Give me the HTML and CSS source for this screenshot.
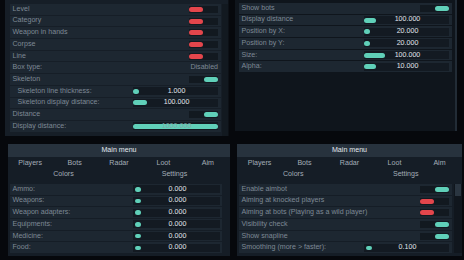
FILE: index.html
```html
<!DOCTYPE html>
<html>
<head>
<meta charset="utf-8">
<link rel="stylesheet" href="styles.css">
</head>
<body>
<div class="screen">
  <div class="top">
    <section class="win win-tl">
      <div class="list">
        <div class="row"><span class="lbl">Level</span><span class="tog off"><i></i></span></div>
        <div class="row"><span class="lbl">Category</span><span class="tog off"><i></i></span></div>
        <div class="row"><span class="lbl">Weapon in hands</span><span class="tog off"><i></i></span></div>
        <div class="row"><span class="lbl">Corpse</span><span class="tog off"><i></i></span></div>
        <div class="row"><span class="lbl">Line</span><span class="tog off"><i></i></span></div>
        <div class="row"><span class="lbl">Box type:</span><span class="combo">Disabled</span></div>
        <div class="row"><span class="lbl">Skeleton</span><span class="tog on"><i></i></span></div>
        <div class="row"><span class="lbl sub">Skeleton line thickness:</span><span class="slider"><i style="width:6px"></i><b>1.000</b></span></div>
        <div class="row"><span class="lbl sub">Skeleton display distance:</span><span class="slider"><i style="width:14px"></i><b>100.000</b></span></div>
        <div class="row"><span class="lbl">Distance</span><span class="tog on"><i></i></span></div>
        <div class="row"><span class="lbl">Display distance:</span><span class="slider"><i style="width:85px"></i><b class="dim">1000.000</b></span></div>
      </div>
      <div class="vbar"></div>
    </section>
    <section class="win win-tr">
      <div class="list">
        <div class="row"><span class="lbl">Show bots</span><span class="tog on"><i></i></span></div>
        <div class="row"><span class="lbl">Display distance</span><span class="slider"><i style="width:12px"></i><b>100.000</b></span></div>
        <div class="row"><span class="lbl">Position by X:</span><span class="slider"><i style="width:6px"></i><b>20.000</b></span></div>
        <div class="row"><span class="lbl">Position by Y:</span><span class="slider"><i style="width:6px"></i><b>20.000</b></span></div>
        <div class="row"><span class="lbl">Size:</span><span class="slider"><i style="width:21px"></i><b>100.000</b></span></div>
        <div class="row"><span class="lbl">Alpha:</span><span class="slider"><i style="width:12px"></i><b>10.000</b></span></div>
      </div>
    </section>
  </div>
  <div class="bottom">
    <section class="win menu menu-l">
      <div class="menu-head">Main menu</div>
      <div class="tabs five"><span>Players</span><span>Bots</span><span>Radar</span><span>Loot</span><span>Aim</span></div>
      <div class="tabs two"><span>Colors</span><span>Settings</span></div>
      <div class="list">
        <div class="row"><span class="lbl">Ammo:</span><span class="slider"><i class="dot"></i><b>0.000</b></span></div>
        <div class="row"><span class="lbl">Weapons:</span><span class="slider"><i class="dot"></i><b>0.000</b></span></div>
        <div class="row"><span class="lbl">Weapon adapters:</span><span class="slider"><i class="dot"></i><b>0.000</b></span></div>
        <div class="row"><span class="lbl">Equipments:</span><span class="slider"><i class="dot"></i><b>0.000</b></span></div>
        <div class="row"><span class="lbl">Medicine:</span><span class="slider"><i class="dot"></i><b>0.000</b></span></div>
        <div class="row"><span class="lbl">Food:</span><span class="slider"><i class="dot"></i><b>0.000</b></span></div>
      </div>
    </section>
    <section class="win menu menu-r">
      <div class="menu-head">Main menu</div>
      <div class="tabs five"><span>Players</span><span>Bots</span><span>Radar</span><span>Loot</span><span>Aim</span></div>
      <div class="tabs two"><span>Colors</span><span>Settings</span></div>
      <div class="body">
        <div class="list">
          <div class="row"><span class="lbl">Enable aimbot</span><span class="tog on"><i></i></span></div>
          <div class="row"><span class="lbl">Aiming at knocked players</span><span class="tog off"><i></i></span></div>
          <div class="row"><span class="lbl">Aiming at bots (Playing as a wild player)</span><span class="tog off"><i></i></span></div>
          <div class="row"><span class="lbl">Visibility check</span><span class="tog on"><i></i></span></div>
          <div class="row"><span class="lbl">Show snapline</span><span class="tog on"><i></i></span></div>
          <div class="row"><span class="lbl">Smoothing (more &gt; faster):</span><span class="slider"><i class="dot"></i><b>0.100</b></span></div>
        </div>
        <div class="sbar"><div class="grab"></div></div>
      </div>
    </section>
  </div>
</div>
</body>
</html>
```
FILE: styles.css
```css
* { box-sizing: border-box; margin: 0; padding: 0; }
html, body { width: 464px; height: 260px; overflow: hidden; background: #06080c; }
body {
  font-family: "Liberation Sans", Arial, sans-serif;
  font-size: 7.1px;
  line-height: 1;
  color: #808c98;
}
.screen { display: flex; flex-direction: column; }

.top { display: flex; height: 136px; padding-left: 5px; }
.win { background: #161e27; }
.win-tl {
  width: 224px; height: 136px;
  padding: 4px 0 0 5px;
  display: flex;
  border-right: 1px solid #0c1016;
}
.win-tl .list { width: 212px; }
.vbar { width: 6px; margin-left: 1px; background: #121920; }
.win-tr {
  margin-left: 6px;
  width: 222px; height: 131px;
  padding: 3px 0 0 4px;
  border-right: 2px solid #222c36;
  background: #0f151c;
}
.win-tr .list { width: 213px; }

.list { display: flex; flex-direction: column; gap: 1px; }
.row {
  height: 10.7px;
  background: #1d2731;
  display: flex;
  align-items: center;
  padding-left: 2.5px;
}
.lbl { flex: 1; white-space: nowrap; color: #7d8995; }
.lbl.sub { padding-left: 5px; }

.tog {
  width: 29px; height: 7px;
  margin-right: 3px;
  background: #121920;
  display: flex;
  align-items: center;
}
.tog i { display: block; width: 14px; height: 5px; border-radius: 3px; }
.tog.off i { background: #e3464c; }
.tog.on { justify-content: flex-end; }
.tog.on i { background: #60d0b9; }

.combo { margin-right: 3px; color: #7d8995; }

.slider {
  width: 85px; height: 8px;
  margin-right: 3px;
  background: #131a22;
  display: grid;
  align-items: center;
}
.slider i, .slider b { grid-area: 1 / 1; }
.slider i { display: block; height: 5px; border-radius: 3px; background: #60d0b9; }
.slider i.dot { width: 6px; margin-left: 2px; height: 4.5px; }
.slider b {
  font-weight: normal;
  color: #e0e7ed;
  text-align: center;
  padding-left: 2px;
}
.slider b.dim { color: #7fa9a6; }

.bottom { display: flex; margin-top: 8px; height: 112px; }
.menu { display: flex; flex-direction: column; background: #151d26; }
.menu-l { margin-left: 8px; width: 222px; }
.menu-r { margin-left: 7px; width: 225px; }
.menu-head {
  height: 13px;
  background: #27323d;
  color: #e2e8ee;
  display: flex; align-items: center; justify-content: center;
  margin-bottom: 1px;
}
.tabs { display: grid; height: 11px; align-items: center; color: #a3adb7; }
.tabs span { text-align: center; }
.tabs.five { grid-template-columns: repeat(5, 1fr); }
.tabs.two { grid-template-columns: 1fr 1fr; }
.menu .list { margin: 4px 0 0 2px; width: 212px; }
.menu-l .slider { width: 87px; margin-right: 2px; }
.body { display: flex; }
.menu-r .list { width: 213px; }
.sbar { flex: 1; margin: 4px 0 0 2px; background: #10161d; }
.grab { height: 12px; margin: 0 1px; background: #2a3540; }
```
